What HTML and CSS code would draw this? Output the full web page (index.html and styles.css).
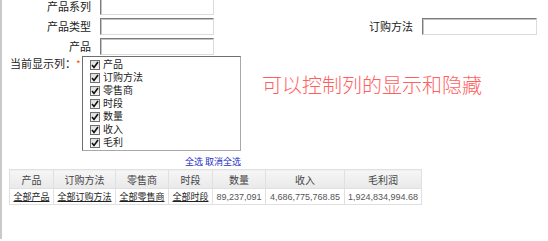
FILE: index.html
```html
<!DOCTYPE html>
<html lang="zh-CN">

<head>
    <meta charset="UTF-8">
    <meta name="viewport" content="width=device-width, initial-scale=1.0">
    <title>列显示控制</title>
    <link rel="stylesheet" href="styles.css">
</head>

<body>
    <div class="page">
        <div class="form">
            <div class="row">
                <label class="label">产品系列</label>
                <input class="field" type="text">
            </div>
            <div class="row">
                <label class="label">产品类型</label>
                <input class="field" type="text">
                <div class="group right">
                    <label class="label short">订购方法</label>
                    <input class="field" type="text">
                </div>
            </div>
            <div class="row">
                <label class="label">产品</label>
                <input class="field" type="text">
            </div>

            <!-- 列选择 -->
            <div class="row cols">
                <span class="cols-label">当前显示列：<span class="star">*</span></span>
                <div class="listbox">
                    <div class="item"><span class="check"><svg width="8" height="8" viewBox="0 0 8 8"><path d="M1 4 L3 6.5 L7 1" fill="none" stroke="#111" stroke-width="1.6"/></svg></span>产品</div>
                    <div class="item"><span class="check"><svg width="8" height="8" viewBox="0 0 8 8"><path d="M1 4 L3 6.5 L7 1" fill="none" stroke="#111" stroke-width="1.6"/></svg></span>订购方法</div>
                    <div class="item"><span class="check"><svg width="8" height="8" viewBox="0 0 8 8"><path d="M1 4 L3 6.5 L7 1" fill="none" stroke="#111" stroke-width="1.6"/></svg></span>零售商</div>
                    <div class="item"><span class="check"><svg width="8" height="8" viewBox="0 0 8 8"><path d="M1 4 L3 6.5 L7 1" fill="none" stroke="#111" stroke-width="1.6"/></svg></span>时段</div>
                    <div class="item"><span class="check"><svg width="8" height="8" viewBox="0 0 8 8"><path d="M1 4 L3 6.5 L7 1" fill="none" stroke="#111" stroke-width="1.6"/></svg></span>数量</div>
                    <div class="item"><span class="check"><svg width="8" height="8" viewBox="0 0 8 8"><path d="M1 4 L3 6.5 L7 1" fill="none" stroke="#111" stroke-width="1.6"/></svg></span>收入</div>
                    <div class="item"><span class="check"><svg width="8" height="8" viewBox="0 0 8 8"><path d="M1 4 L3 6.5 L7 1" fill="none" stroke="#111" stroke-width="1.6"/></svg></span>毛利</div>
                </div>
                <div class="note">可以控制列的显示和隐藏</div>
            </div>
            <div class="links">
                <a href="#">全选</a> <a href="#">取消全选</a>
            </div>
        </div>

        <table class="grid">
            <colgroup>
                <col style="width: 44px;">
                <col style="width: 62px;">
                <col style="width: 53px;">
                <col style="width: 44px;">
                <col style="width: 53px;">
                <col style="width: 79px;">
                <col style="width: 77px;">
            </colgroup>
            <thead>
                <tr>
                    <th>产品</th>
                    <th>订购方法</th>
                    <th>零售商</th>
                    <th>时段</th>
                    <th>数量</th>
                    <th>收入</th>
                    <th>毛利润</th>
                </tr>
            </thead>
            <tbody>
                <tr>
                    <td><a href="#">全部产品</a></td>
                    <td><a href="#">全部订购方法</a></td>
                    <td><a href="#">全部零售商</a></td>
                    <td><a href="#">全部时段</a></td>
                    <td class="num">89,237,091</td>
                    <td class="num">4,686,775,768.85</td>
                    <td class="num">1,924,834,994.68</td>
                </tr>
            </tbody>
        </table>
    </div>
</body>

</html>
```

FILE: styles.css
```css
body {
    margin: 0;
    font-family: "Noto Sans CJK SC", "Liberation Sans", sans-serif;
    font-size: 11px;
    color: #222;
    background: #fff;
    overflow: hidden;
}

.page {
    border-left: 2px solid #c9c9c9;
    min-height: 100vh;
    padding-left: 7px;
    padding-right: 11px;
    box-sizing: border-box;
}

.form {
    margin-top: -2px;
}

.row {
    display: flex;
    align-items: center;
    height: 17px;
    margin-bottom: 3px;
}

.label {
    width: 82px;
    text-align: right;
    margin-right: 9px;
    line-height: 17px;
}

.label.short {
    width: auto;
}

.field {
    width: 114px;
    height: 17px;
    box-sizing: border-box;
    margin: 0;
    padding: 0;
    border: 1px solid;
    border-color: #7c7c7c #dcdcdc #dcdcdc #7c7c7c;
    box-shadow: inset 1px 1px 0 #c4c4c4;
    background: #fff;
}

.group {
    display: flex;
    align-items: center;
}

.group.right {
    margin-left: auto;
}

.group .field {
    width: 115px;
}

.row.cols {
    height: auto;
    align-items: flex-start;
    margin-top: -2px;
    margin-bottom: 0;
}

.cols-label {
    width: 73px;
    padding-left: 1px;
    box-sizing: border-box;
    line-height: 13px;
    margin-top: 1px;
    white-space: nowrap;
}

.star {
    color: #ff5a00;
    font-size: 10px;
}

.listbox {
    width: 159px;
    box-sizing: border-box;
    border: 1px solid;
    border-color: #6e6e6e #a8a8a8 #a8a8a8 #6e6e6e;
    padding: 1px 0 1px 7px;
}

.item {
    display: flex;
    align-items: center;
    height: 13px;
    line-height: 12px;
    font-size: 10px;
    font-family: "Liberation Sans", "Noto Sans CJK SC", sans-serif;
}

.check {
    width: 10px;
    height: 10px;
    box-sizing: border-box;
    border: 1px solid #6f6f6f;
    background: linear-gradient(#dedede, #f7f7f7);
    display: flex;
    align-items: center;
    justify-content: center;
    margin-right: 3px;
}

.note {
    margin-left: 21px;
    margin-top: 18px;
    font-size: 20px;
    line-height: 22px;
    color: #ff5f5f;
    font-weight: 300;
}

.links {
    width: 232px;
    text-align: right;
    font-size: 9px;
    line-height: 12px;
    margin-top: 5px;
}

.links a {
    color: #1a2ec8;
    text-decoration: none;
}

.grid {
    margin-top: 1px;
    border-collapse: collapse;
    table-layout: fixed;
    width: 412px;
    font-size: 10px;
    font-family: "Liberation Sans", "Noto Sans CJK SC", sans-serif;
}

.grid th,
.grid td {
    border: 1px solid #e0e0e0;
    padding: 0;
    text-align: center;
    white-space: nowrap;
    overflow: hidden;
}

.grid th {
    height: 18px;
    font-weight: normal;
    color: #444;
    background: linear-gradient(#f6f6f6, #e9e9e9);
}

.grid td {
    height: 15px;
    font-size: 9px;
    color: #333;
}

.grid td a {
    color: #222;
    text-decoration: underline;
}

.grid td.num {
    font-size: 9px;
    color: #555;
}
```
